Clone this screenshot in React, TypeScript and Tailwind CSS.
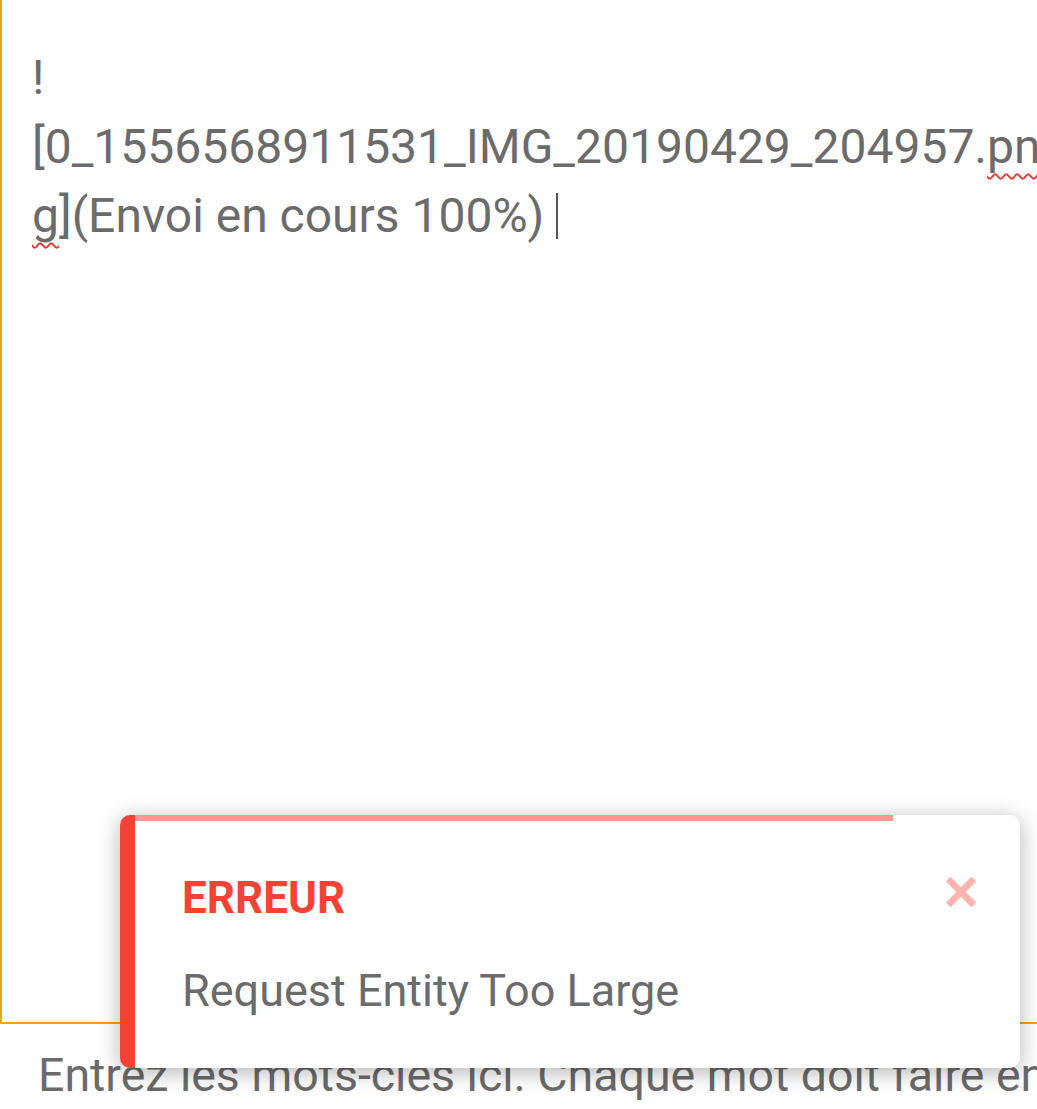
import { X } from "lucide-react";

function Toast() {
    return (
        <div className="absolute left-[120px] top-[815px] flex h-[253px] w-[900px] overflow-hidden rounded-[10px] bg-white shadow-[0_4px_22px_rgba(0,0,0,0.3)]">
            <div className="w-[15px] shrink-0 bg-[#f44336]" />
            <div className="relative flex-1">
                <div className="h-[6px] w-[758px] bg-[#fb9a95]" />
                <div className="pl-[47px] pt-[49px]">
                    <p className="text-[44px] font-bold leading-[56px] text-[#f44336]">ERREUR</p>
                    <p className="mt-[37px] text-[45px] leading-[56px] text-[#6b6b6b]">Request Entity Too Large</p>
                </div>
                <X className="absolute right-[38px] top-[56px] h-[42px] w-[42px] text-[#ffb3ae]" strokeWidth={3.8} strokeLinecap="square" />
            </div>
        </div>
    );
}

export default function App() {
    return (
        <div className="relative h-[1109px] w-[1037px] overflow-hidden bg-white font-['Roboto','Liberation_Sans',sans-serif]">
            <div className="h-[1024px] border-b-2 border-l-2 border-[#eea41e] pl-[30px] pt-[43px] text-[48px] leading-[69px] text-[#6b6b6b]">
                <div className="whitespace-nowrap">!</div>
                <div className="whitespace-nowrap">
                    [0_1556568911531_IMG_20190429_204957.
                    <span className="underline decoration-[#e53935] decoration-wavy decoration-[2px] underline-offset-[10px]">pn</span>
                </div>
                <div className="flex items-center whitespace-nowrap">
                    <span className="underline decoration-[#e53935] decoration-wavy decoration-[2px] underline-offset-[10px]">g</span>
                    ](Envoi en cours 100%)
                    <span className="ml-[12px] inline-block h-[46px] w-[2px] bg-[#555]" />
                </div>
            </div>
            <div className="whitespace-nowrap pl-[38px] pt-[23px] text-[46.5px] leading-[56px] text-[#6b6b6b]">
                Entrez les mots-clés ici. Chaque mot doit faire entre 2 et 20 caractères.
            </div>
            <Toast />
        </div>
    );
}
